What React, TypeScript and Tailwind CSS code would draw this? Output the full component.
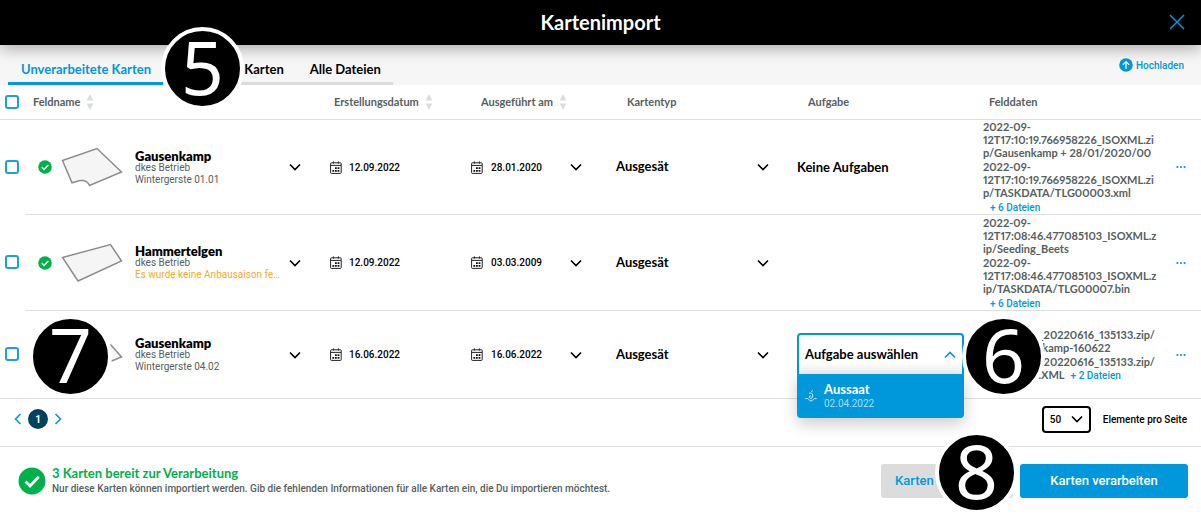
import React from "react";

const heading = "font-['Lato','Noto_Sans',sans-serif]";

type Row = {
  id: string;
  name: string;
  farm: string;
  season: string;
  warning?: boolean;
  shape: string;
  created: string;
  executed: string;
  task: "none" | "empty" | "open";
  files: string[][];
  more: string;
  inlineMore?: boolean;
  height: string;
};

const rows: Row[] = [
  {
    id: "r1",
    name: "Gausenkamp",
    farm: "dkes Betrieb",
    season: "Wintergerste 01.01",
    shape: "M1.5 13.5 L36 1.5 L60.5 25 L28.5 38.5 C27 34.5 23.5 33 19 33.5 L11 35.8 Z",
    created: "12.09.2022",
    executed: "28.01.2020",
    task: "none",
    files: [
      ["2022-09-", "12T17:10:19.766958226_ISOXML.zi", "p/Gausenkamp + 28/01/2020/00"],
      ["2022-09-", "12T17:10:19.766958226_ISOXML.zi", "p/TASKDATA/TLG00003.xml"],
    ],
    more: "+ 6 Dateien",
    height: "h-[95px]",
  },
  {
    id: "r2",
    name: "Hammertelgen",
    farm: "dkes Betrieb",
    season: "Es wurde keine Anbausaison festgelegt",
    warning: true,
    shape: "M1.5 14.5 L49.5 1.5 L60.5 18 L17 38 Z",
    created: "12.09.2022",
    executed: "03.03.2009",
    task: "empty",
    files: [
      ["2022-09-", "12T17:08:46.477085103_ISOXML.z", "ip/Seeding_Beets"],
      ["2022-09-", "12T17:08:46.477085103_ISOXML.z", "ip/TASKDATA/TLG00007.bin"],
    ],
    more: "+ 6 Dateien",
    height: "h-[96px]",
  },
  {
    id: "r3",
    name: "Gausenkamp",
    farm: "dkes Betrieb",
    season: "Wintergerste 04.02",
    shape: "M1.5 15 L50 10 L60.5 22 L24 37 Z",
    created: "16.06.2022",
    executed: "16.06.2022",
    task: "open",
    files: [
      ["TASKDATA_20220616_135133.zip/", "xml/Gausenkamp-160622"],
      ["TASKDATA_20220616_135133.zip/", "TASKDATA.XML"],
    ],
    more: "+ 2 Dateien",
    inlineMore: true,
    height: "h-[88px]",
  },
];

function Chevron({ up = false, className = "" }: { up?: boolean; className?: string }) {
  return (
    <svg viewBox="0 0 12 8" className={`h-2 w-3 shrink-0 ${className}`} fill="none" stroke="currentColor" strokeWidth="1.6">
      <path d={up ? "M1 6.5 L6 1.5 L11 6.5" : "M1 1.5 L6 6.5 L11 1.5"} />
    </svg>
  );
}

function CheckCircle({ className }: { className: string }) {
  return (
    <svg viewBox="0 0 28 28" className={`shrink-0 ${className}`}>
      <circle cx="14" cy="14" r="13.5" fill="#00b04b" />
      <path d="M7.5 14.5 L12 19 L20.8 9.8" fill="none" stroke="#fff" strokeWidth="2.8" />
    </svg>
  );
}

function CalendarIcon() {
  return (
    <svg viewBox="0 0 12 13" className="h-[13px] w-3 shrink-0" fill="none" stroke="#222" strokeWidth="1">
      <rect x="0.6" y="1.8" width="10.6" height="10.6" rx="0.8" />
      <path d="M1 4.4 H11 M3.4 0.4 V2.6 M8.4 0.4 V2.6" />
      <path
        d="M5 6.3h1.8v1.8h-1.8z M7.6 6.3h1.8v1.8h-1.8z M2.4 8.9h1.8v1.8h-1.8z M5 8.9h1.8v1.8h-1.8z M7.6 8.9h1.8v1.8h-1.8z"
        fill="#111"
        stroke="none"
      />
    </svg>
  );
}

function SeedIcon() {
  return (
    <svg viewBox="0 0 12 12" className="h-3 w-3 shrink-0" fill="none" stroke="#cdeafa" strokeWidth="1">
      <path d="M0.3 8.6 H2.6 C3.6 8.8 4.4 11 6 11 C7.6 11 8.4 8.8 9.4 8.6 H11.7" />
      <path d="M7.6 0.4 L6.4 2 M4 3.4 C5.4 2.6 7.6 3 7.7 5 C7.8 6.4 7.4 8.4 5.8 8.4 C4.4 8.4 3.8 7 4.6 6.2 C5.2 5.6 6 6 6.2 6.6" />
    </svg>
  );
}

function SortIcon() {
  return (
    <svg viewBox="0 0 8 18" className="h-[18px] w-2 shrink-0" fill="#dcdcdc">
      <path d="M4 1 L7.3 7.5 H0.7 Z M4 17 L7.3 10.5 H0.7 Z" />
    </svg>
  );
}

function Checkbox({ label }: { label: string }) {
  return (
    <input
      type="checkbox"
      aria-label={label}
      className="ml-[5px] block size-[14px] appearance-none rounded-[3px] border-2 border-[#1c9fe0] bg-white checked:bg-[#1c9fe0]"
    />
  );
}

function Badge({ value, place }: { value: string; place: string }) {
  return (
    <div
      className={`absolute z-20 flex size-[83px] items-center justify-center rounded-full border-4 border-white bg-black pb-1 font-['Noto_Sans',sans-serif] text-[75px] leading-[75px] text-white ${place}`}
    >
      {value}
    </div>
  );
}

function HeaderCell({ label, sortable, className }: { label: string; sortable?: boolean; className: string }) {
  return (
    <th scope="col" className={`p-0 text-left text-[11px] font-bold text-[#56605f] ${heading} ${className}`}>
      <span className="flex items-center gap-1.5">
        {label}
        {sortable && <SortIcon />}
      </span>
    </th>
  );
}

function TaskSelect() {
  return (
    <div className="relative w-[167px]">
      <button
        type="button"
        aria-haspopup="listbox"
        aria-expanded="true"
        className={`flex h-[43px] w-full items-center justify-between rounded-t border-2 border-[#0098db] bg-white bg-linear-to-t from-[#eeeeee] to-white to-30% px-1.5 text-[13px] font-bold text-black ${heading}`}
      >
        Aufgabe auswählen
        <Chevron up className="text-[#0098db]" />
      </button>
      <ul
        role="listbox"
        aria-label="Aufgabe"
        className="absolute top-[41px] left-0 z-10 w-full rounded-b bg-[#0098db] shadow-[0_6px_16px_rgba(0,0,0,0.2)]"
      >
        <li role="option" aria-selected="true" className="flex h-11 items-center gap-[7px] pl-2">
          <SeedIcon />
          <span className="flex flex-col">
            <span className={`text-[13px] leading-4 font-bold text-white ${heading}`}>Aussaat</span>
            <span className="text-[10px] leading-[14px] text-[#a9dcf5]">02.04.2022</span>
          </span>
        </li>
      </ul>
    </div>
  );
}

function MapRow({ row, last }: { row: Row; last: boolean }) {
  const line = "border-b border-[#dfdfdf]";
  return (
    <tr className={row.height}>
      <td className={`p-0 pb-0.5 ${last ? line : ""}`}>
        <Checkbox label={`${row.name} auswählen`} />
      </td>
      <td className={`p-0 ${line}`}>
        <div className="flex items-center pr-[21px] pl-[13px]">
          <CheckCircle className="size-[14px]" />
          <svg viewBox="0 0 62 40" className="ml-[9px] h-10 w-[62px] shrink-0" fill="#f5f5f5" stroke="#8d8d8d" strokeWidth="1.5">
            <path d={row.shape} />
          </svg>
          <div className="ml-3 flex w-[146px] flex-col">
            <span className={`text-[13px] leading-[14px] font-extrabold text-black ${heading}`}>{row.name}</span>
            <span className="text-[10px] leading-[10px] text-[#56605f]">{row.farm}</span>
            <span className={`truncate text-[10px] leading-[13px] ${row.warning ? "text-[#f9a825]" : "text-[#56605f]"}`}>
              {row.season}
            </span>
          </div>
          <button type="button" aria-label="Feld wählen" className="ml-auto">
            <Chevron />
          </button>
        </div>
      </td>
      <td className={`p-0 ${line}`}>
        <div className="flex items-center gap-[7px] pl-2 text-[10px] font-medium text-black">
          <CalendarIcon />
          {row.created}
        </div>
      </td>
      <td className={`p-0 ${line}`}>
        <button type="button" className="flex w-full items-center gap-2 pr-[26px] pl-2 text-[10px] font-medium text-black">
          <CalendarIcon />
          {row.executed}
          <Chevron className="ml-auto" />
        </button>
      </td>
      <td className={`p-0 ${line}`}>
        <div className="grid items-center pr-5 pl-2">
          <select
            aria-label="Kartentyp"
            className={`col-start-1 row-start-1 w-full appearance-none bg-transparent text-[13px] font-bold text-black ${heading}`}
          >
            <option>Ausgesät</option>
          </select>
          <Chevron className="pointer-events-none col-start-1 row-start-1 justify-self-end" />
        </div>
      </td>
      <td className={`p-0 pl-2 ${line}`}>
        {row.task === "none" && <span className={`text-[13px] font-bold text-black ${heading}`}>Keine Aufgaben</span>}
        {row.task === "open" && <TaskSelect />}
      </td>
      <td className={`p-0 pl-2 ${line}`}>
        <div className={`flex flex-col gap-px text-[11px] leading-[13px] font-bold text-[#56605f] proportional-nums ${heading}`}>
          {row.files.map((lines, i) => (
            <div key={i}>
              {lines.map((text, j) => (
                <div key={j} className="whitespace-nowrap">
                  {text}
                  {row.inlineMore && i === row.files.length - 1 && j === lines.length - 1 && (
                    <button type="button" className="ml-1.5 font-['Roboto',sans-serif] text-[10px] font-medium text-[#0098db]">
                      {row.more}
                    </button>
                  )}
                </div>
              ))}
            </div>
          ))}
        </div>
        {!row.inlineMore && (
          <button type="button" className="mt-0.5 ml-[7px] block text-[10px] leading-[13px] font-medium text-[#0098db]">
            {row.more}
          </button>
        )}
      </td>
      <td className={`p-0 ${line}`}>
        <button type="button" aria-label="Mehr" className="mr-[15px] ml-auto block">
          <svg viewBox="0 0 10 4" className="h-1 w-2.5" fill="#0098db">
            <circle cx="1.4" cy="2" r="1.1" />
            <circle cx="5" cy="2" r="1.1" />
            <circle cx="8.6" cy="2" r="1.1" />
          </svg>
        </button>
      </td>
    </tr>
  );
}

export default function App() {
  return (
    <div className="relative w-full overflow-hidden bg-white font-['Roboto',sans-serif] text-black">
      <header className="relative z-10 grid h-[45px] grid-cols-[1fr_auto_1fr] items-center bg-black px-4 pb-0.5 shadow-[0_4px_14px_rgba(0,0,0,0.3)]">
        <h1 className={`col-start-2 text-xl font-bold text-white ${heading}`}>Kartenimport</h1>
        <button type="button" aria-label="Schließen" className="justify-self-end text-[#0098db]">
          <svg viewBox="0 0 16 16" className="size-4" fill="none" stroke="currentColor" strokeWidth="1.5">
            <path d="M1 1 L15 15 M15 1 L1 15" />
          </svg>
        </button>
      </header>

      <div className="flex h-10 items-end justify-between bg-[#f6f6f6] pr-[17px] pl-2">
        <nav className={`flex text-[13px] leading-5 font-bold ${heading}`}>
          <a href="#offen" className="border-b-[3px] border-[#0098db] pr-3 pb-[3px] pl-[13px] text-[#0098db]">
            Unverarbeitete Karten
          </a>
          <a href="#fertig" className="border-b-[3px] border-[#dcdcdc] pr-[13px] pb-[3px] pl-1.5">
            Verarbeitete Karten
          </a>
          <a href="#alle" className="border-b-[3px] border-[#dcdcdc] pr-3 pb-[3px] pl-[13px]">
            Alle Dateien
          </a>
        </nav>
        <button type="button" className="flex items-center gap-[3px] self-center text-[10px] font-medium text-[#0098db]">
          <svg viewBox="0 0 14 14" className="size-[14px]">
            <circle cx="7" cy="7" r="6.8" fill="#0098db" />
            <path d="M7 11 V3.8 M3.8 6.8 L7 3.6 L10.2 6.8" fill="none" stroke="#fff" strokeWidth="1.2" />
          </svg>
          Hochladen
        </button>
      </div>

      <table className="w-full table-fixed border-separate border-spacing-0">
        <colgroup>
          <col className="w-[25px]" />
          <col />
          <col className="w-[141px]" />
          <col className="w-[145px]" />
          <col className="w-[181px]" />
          <col className="w-[186px]" />
          <col className="w-[175px]" />
          <col className="w-[51px]" />
        </colgroup>
        <thead>
          <tr className="h-[35px] *:border-b *:border-[#dfdfdf]">
            <th className="p-0">
              <Checkbox label="Alle auswählen" />
            </th>
            <HeaderCell label="Feldname" sortable className="pl-2" />
            <HeaderCell label="Erstellungsdatum" sortable className="pl-3" />
            <HeaderCell label="Ausgeführt am" sortable className="pl-[18px]" />
            <HeaderCell label="Kartentyp" className="pl-[19px]" />
            <HeaderCell label="Aufgabe" className="pl-[19px]" />
            <HeaderCell label="Felddaten" className="pl-[14px]" />
            <td className="p-0" />
          </tr>
        </thead>
        <tbody>
          {rows.map((row, i) => (
            <MapRow key={row.id} row={row} last={i === rows.length - 1} />
          ))}
        </tbody>
      </table>

      <div className="flex h-12 items-center justify-between border-b border-[#dfdfdf] pr-[14px] pb-[7px] pl-3">
        <nav aria-label="Seiten" className="flex items-center gap-1 text-[#0098db]">
          <button type="button" aria-label="Zurück">
            <Chevron className="rotate-90" />
          </button>
          <button type="button" aria-current="page" className="size-5 rounded-full bg-[#00435f] text-[10px] font-bold text-white">
            1
          </button>
          <button type="button" aria-label="Weiter">
            <Chevron className="-rotate-90" />
          </button>
        </nav>
        <div className="flex items-center gap-3 text-[10px] font-medium">
          <div className="grid items-center">
            <select
              id="page-size"
              className="col-start-1 row-start-1 h-[27px] w-[49px] appearance-none rounded border-2 border-black bg-white pl-1.5"
            >
              <option>50</option>
            </select>
            <Chevron className="pointer-events-none col-start-1 row-start-1 mr-2 justify-self-end" />
          </div>
          <label htmlFor="page-size">Elemente pro Seite</label>
        </div>
      </div>

      <footer className="flex h-[67px] items-center justify-between pr-[13px] pl-[18px]">
        <div className="flex items-center gap-1.5">
          <CheckCircle className="size-7" />
          <div>
            <p className={`text-[13px] leading-4 font-bold text-[#00b04b] ${heading}`}>3 Karten bereit zur Verarbeitung</p>
            <p className="text-[10px] leading-4 font-medium text-[#56605f]">
              Nur diese Karten können importiert werden. Gib die fehlenden Informationen für alle Karten ein, die Du
              importieren möchtest.
            </p>
          </div>
        </div>
        <div className="flex gap-[7px] text-[13px] font-medium">
          <button type="button" className="h-[34px] w-[132px] rounded-[3px] bg-[#dcdcdc] px-[14px] text-left text-[#0098db]">
            Karten löschen
          </button>
          <button type="button" className="h-[34px] w-[168px] rounded-[3px] bg-[#0098db] text-white">
            Karten verarbeiten
          </button>
        </div>
      </footer>

      <Badge value="5" place="top-[27px] left-[161px]" />
      <Badge value="7" place="top-[315px] left-[29px]" />
      <Badge value="6" place="top-[315px] left-[962px]" />
      <Badge value="8" place="top-[431px] left-[935px]" />
    </div>
  );
}
